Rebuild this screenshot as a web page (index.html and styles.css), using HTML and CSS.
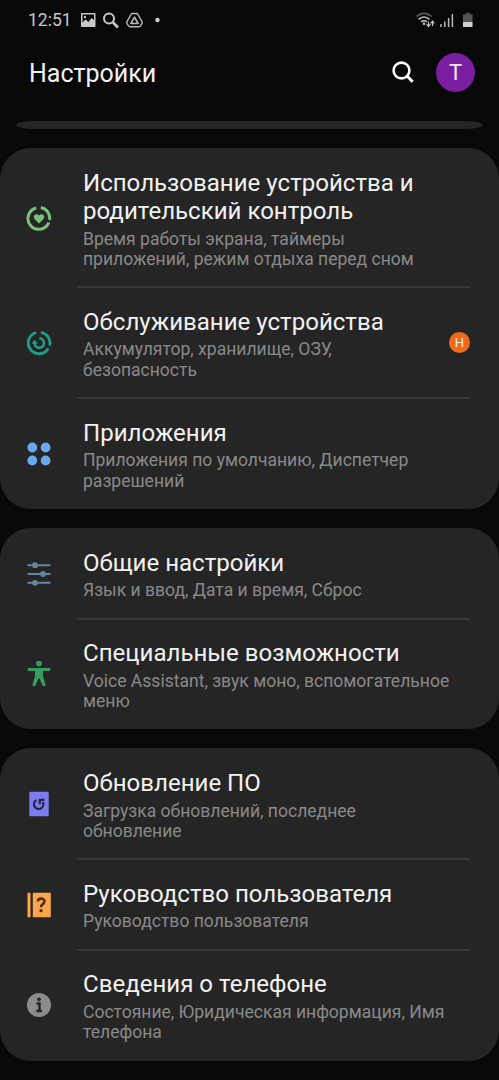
FILE: index.html
```html
<!DOCTYPE html>
<html lang="ru">
<head>
<meta charset="utf-8">
<title>Настройки</title>
<link rel="stylesheet" href="styles.css">
</head>
<body>
<div class="status">
  <span class="clock">12:51</span>
  <svg class="status-left" width="84" height="18" viewBox="0 0 84 18">
    <path fill="#c8c8c8" fill-rule="evenodd" d="M2 2h12.500q1 0 1 1v12q0 1-1 1h-12.500q-1 0-1-1v-12q0-1 1-1zM2.500 3.500v8l3-3 3 2.500 3-4 2.500 2v-5.500z"/>
    <circle cx="5" cy="6" r="1.200" fill="#c8c8c8"/>
    <circle cx="29" cy="7.500" r="5" fill="none" stroke="#c8c8c8" stroke-width="2"/>
    <path d="M33 11.500l5 5" stroke="#c8c8c8" stroke-width="2.600"/>
    <path d="M52.500 2.500h4q1 0 1.500 1l4 7.200q.5 1-.1 1.900l-1.400 2.300q-.5.800-1.500.800h-9q-1 0-1.500-.8l-1.400-2.300q-.6-.9-.1-1.900l4-7.200q.5-1 1.500-1z" fill="none" stroke="#b8b8b8" stroke-width="1.400"/>
    <path d="M54.500 6.200l3.600 6.300h-7.200z" fill="none" stroke="#b8b8b8" stroke-width="1.600" stroke-linejoin="round"/>
    <circle cx="77.500" cy="9" r="2.200" fill="#d0d0d0"/>
  </svg>
  <svg class="status-right" width="60" height="18" viewBox="0 0 60 18">
    <g fill="none" stroke-width="1.500">
      <path d="M1.500 5.500q7.500-6.500 15 0" stroke="#666"/>
      <path d="M3.500 8.300q5.500-4.600 11 0M6 11q3-2.500 6 0" stroke="#c4c4c4"/>
    </g>
    <circle cx="9" cy="12.700" r="1.300" fill="#c4c4c4"/>
    <path d="M13.500 10.500v4.500M11.500 13l2 2.500 2-2.500M17.500 15v-4.500M15.700 12.500l1.800-2.500 1.800 2.500" fill="none" stroke="#c4c4c4" stroke-width="1.200"/>
    <path d="M26 16v-3M29.800 16v-5.500M33.600 16v-9M37.400 16v-13" stroke="#b8b8b8" stroke-width="1.500"/>
    <path fill="#555" d="M51 2h4v1.500h2.500v8h-9.500v-8h3z"/>
    <path fill="#d0d0d0" d="M48 11h9.500v5h-9.500z"/>
  </svg>
</div>
<header class="bar">
  <h1 class="heading">Настройки</h1>
  <svg class="search" width="24" height="24" viewBox="0 0 24 24" fill="none" stroke="#fff">
    <circle cx="10.500" cy="10.500" r="7.900" stroke-width="2.600"/>
    <path d="M16 16l5.700 5.700" stroke-width="3"/>
  </svg>
  <span class="avatar">T</span>
</header>
<div class="sliver"></div>
<main class="cards">
  <section class="card">
    <div class="row">
      <svg class="icon" viewBox="0 0 26 26"><path d="M10.300 3A10.800 10.800 0 1 0 22.800 17.500M14.800 2.400A10.800 10.800 0 0 1 23.500 15" fill="none" stroke="#78c278" stroke-width="3"/><path fill="#78c278" d="M13 18.500l-4.500-4.600q-1.500-2 0-3.800 2.300-2 4.500.4 2.200-2.400 4.500-.4 1.500 1.800 0 3.800z"/></svg>
      <div class="text"><h2 class="name">Использование устройства и<br>родительский контроль</h2><p class="note">Время работы экрана, таймеры<br>приложений, режим отдыха перед сном</p></div>
    </div>
    <div class="row">
      <svg class="icon" viewBox="0 0 26 26" fill="none" stroke="#20a088"><path d="M10.300 2.500A10.800 10.800 0 1 0 22.300 18.500M14.800 2.300A10.800 10.800 0 0 1 23.700 15.500" stroke-width="2.800"/><path d="M13.500 8.300a4.700 4.700 0 1 1-4.900 5" stroke-width="2.500"/><path d="M5.500 13.800l3-4 3.400 4z" fill="#20a088" stroke="none"/></svg>
      <div class="text"><h2 class="name">Обслуживание устройства</h2><p class="note">Аккумулятор, хранилище, ОЗУ,<br>безопасность</p></div>
      <span class="badge">Н</span>
    </div>
    <div class="row">
      <svg class="icon" viewBox="0 0 26 26" fill="#69a9ee"><circle cx="6.300" cy="6.500" r="4.900"/><circle cx="19.600" cy="6.500" r="4.900"/><circle cx="6.300" cy="19.500" r="4.900"/><circle cx="19.600" cy="19.500" r="4.900"/></svg>
      <div class="text"><h2 class="name">Приложения</h2><p class="note">Приложения по умолчанию, Диспетчер<br>разрешений</p></div>
    </div>
  </section>
  <section class="card">
    <div class="row">
      <svg class="icon" viewBox="0 0 26 26" fill="#64859b"><path d="M1.500 3.200h23v2h-23zM1.500 12h23v2h-23zM1.500 20.800h23v2h-23z"/><circle cx="9" cy="4.200" r="2.900"/><circle cx="17" cy="13" r="2.900"/><circle cx="9" cy="21.800" r="2.900"/></svg>
      <div class="text"><h2 class="name">Общие настройки</h2><p class="note">Язык и ввод, Дата и время, Сброс</p></div>
    </div>
    <div class="row">
      <svg class="icon" viewBox="0 0 26 26" fill="#379c5d"><circle cx="13" cy="2.500" r="2.900"/><path d="M2.500 7h21q1 0 1 1.500t-1 1.500h-6.500v5l2.700 9.500-2.700 1-3.500-8h-1l-3.500 8-2.700-1 2.700-9.500v-5h-6.500q-1 0-1-1.500t1-1.500z"/></svg>
      <div class="text"><h2 class="name">Специальные возможности</h2><p class="note">Voice Assistant, звук моно, вспомогательное<br>меню</p></div>
    </div>
  </section>
  <section class="card">
    <div class="row">
      <svg class="icon" viewBox="0 0 26 26"><rect x="3.300" y=".8" width="19.400" height="24.500" rx="1.500" fill="#7d7bf0"/><path d="M10.300 9.200A4.700 4.700 0 1 0 16.800 11M12.800 8.800H18.500M13.800 8.800V13.300" fill="none" stroke="#24243d" stroke-width="2.200"/></svg>
      <div class="text"><h2 class="name">Обновление ПО</h2><p class="note">Загрузка обновлений, последнее<br>обновление</p></div>
    </div>
    <div class="row">
      <svg class="icon" viewBox="0 0 26 26"><path fill="#fba54c" d="M1.500.800h3v24.500h-3zM6.800.800h18v24.500h-18z"/><path d="M11.800 9.500q.3-3 3.300-3 3.500.2 3.300 3.200-.2 1.800-1.900 2.700-1.500.9-1.500 2.900" fill="none" stroke="#4a2b10" stroke-width="2.500"/><circle cx="15" cy="18.700" r="1.600" fill="#4a2b10"/></svg>
      <div class="text"><h2 class="name">Руководство пользователя</h2><p class="note">Руководство пользователя</p></div>
    </div>
    <div class="row">
      <svg class="icon" viewBox="0 0 26 26"><circle cx="13" cy="13" r="12" fill="#8c8c8c"/><circle cx="13" cy="7.300" r="1.900" fill="#252525"/><path d="M10.500 11.500h3v7.500M10.300 19h5.700" fill="none" stroke="#252525" stroke-width="2.400"/></svg>
      <div class="text"><h2 class="name">Сведения о телефоне</h2><p class="note">Состояние, Юридическая информация, Имя<br>телефона</p></div>
    </div>
  </section>
</main>
</body>
</html>
```
FILE: styles.css
```css
* { box-sizing: border-box; }
body {
  margin: 0;
  height: 1080px;
  overflow: hidden;
  background: #080808;
  color: #f2f2f2;
  font-family: Roboto, sans-serif;
}
.status { display: flex; align-items: center; height: 40px; padding: 0 24px 0 28px; }
.clock { width: 52px; color: #c6c6c6; font-size: 17.500px; line-height: 40px; }
.status-right { margin-left: auto; }
.bar { display: flex; align-items: center; height: 64px; padding: 0 24px 0 29px; }
.heading { flex: 1; margin: 2px 0 0; font-size: 25px; font-weight: 400; }
.search { margin-right: 21px; }
.avatar {
  width: 39px; height: 39px; border-radius: 50%;
  background: #7b1fa2; color: #f4e6f8;
  font-size: 22px; line-height: 39px; text-align: center;
}
.sliver { height: 8px; margin: 17px 16px 19px; border-radius: 18px / 4px; background: #252525; }
.cards { display: flex; flex-direction: column; gap: 19.200px; }
.card { border-radius: 31px; background: #252525; }
.row { position: relative; display: flex; align-items: center; padding: 20.500px 29px 18px 26px; }
.row + .row::before {
  content: ""; position: absolute; left: 77px; right: 29px; top: -1px;
  height: 2px; background: #383838;
}
.icon { flex: none; width: 26px; height: 26px; margin: 0 31px 2px 0; }
.text { flex: 1; white-space: nowrap; }
.name { margin: 0; font-size: 24.050px; line-height: 28.500px; font-weight: 400; }
.note { margin: 0; padding-top: 3.200px; color: #898989; font-size: 17.550px; line-height: 20.300px; }
.badge {
  width: 21px; height: 21px; margin-bottom: 2px; border-radius: 50%;
  background: #f06a1d; color: #fff0dc;
  font-size: 13px; line-height: 21px; text-align: center;
}
```
